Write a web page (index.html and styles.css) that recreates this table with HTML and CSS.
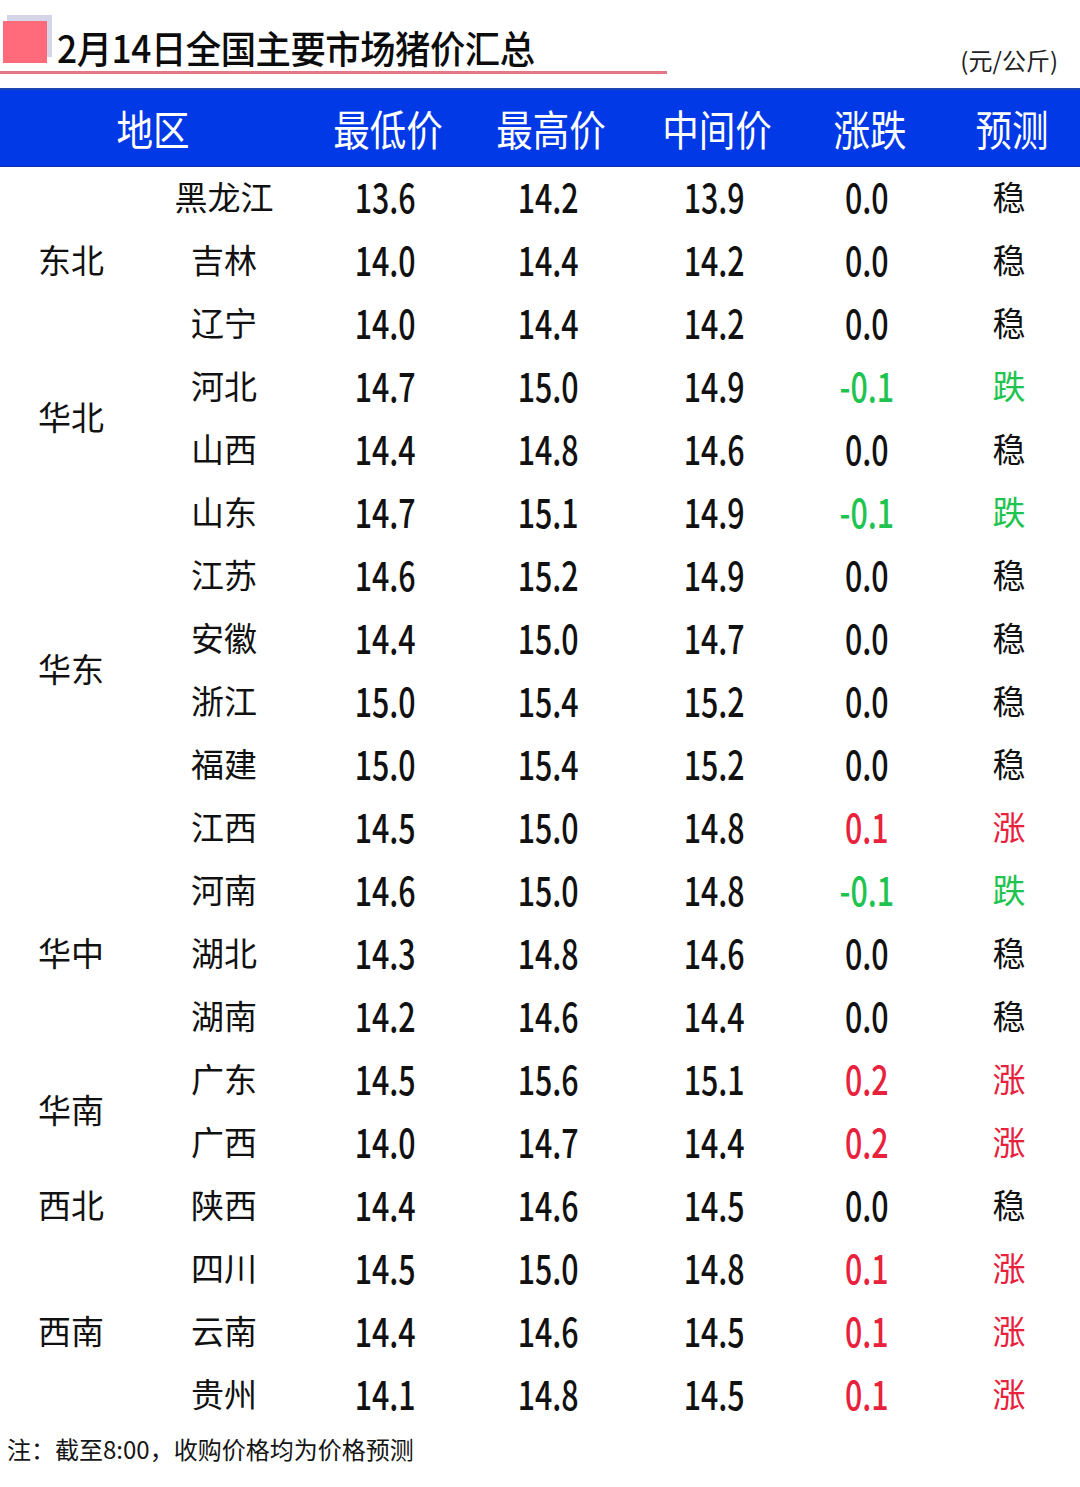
FILE: index.html
```html
<!DOCTYPE html>
<html lang="zh-CN">
<head>
<meta charset="utf-8">
<title>2月14日全国主要市场猪价汇总</title>
<link rel="stylesheet" href="styles.css">
</head>
<body>
<div class="page">
  <div class="top">
    <div class="title-wrap">
      <span class="sq sq-back"></span>
      <span class="sq sq-front"></span>
      <h1 class="title">2月14日全国主要市场猪价汇总</h1>
    </div>
    <div class="unit">(元/公斤)</div>
  </div>

  <div class="thead">
    <div class="th th-area"><span>地区</span></div>
    <div class="th"><span>最低价</span></div>
    <div class="th"><span>最高价</span></div>
    <div class="th"><span>中间价</span></div>
    <div class="th"><span>涨跌</span></div>
    <div class="th"><span>预测</span></div>
  </div>

  <div class="grid">
    <div class="region r3">东北</div>
    <div class="prov">黑龙江</div><div class="num"><span>13.6</span></div><div class="num"><span>14.2</span></div><div class="num"><span>13.9</span></div><div class="num"><span>0.0</span></div><div class="fc">稳</div>
    <div class="prov">吉林</div><div class="num"><span>14.0</span></div><div class="num"><span>14.4</span></div><div class="num"><span>14.2</span></div><div class="num"><span>0.0</span></div><div class="fc">稳</div>
    <div class="prov">辽宁</div><div class="num"><span>14.0</span></div><div class="num"><span>14.4</span></div><div class="num"><span>14.2</span></div><div class="num"><span>0.0</span></div><div class="fc">稳</div>

    <div class="region r2">华北</div>
    <div class="prov">河北</div><div class="num"><span>14.7</span></div><div class="num"><span>15.0</span></div><div class="num"><span>14.9</span></div><div class="num down"><span>-0.1</span></div><div class="fc down">跌</div>
    <div class="prov">山西</div><div class="num"><span>14.4</span></div><div class="num"><span>14.8</span></div><div class="num"><span>14.6</span></div><div class="num"><span>0.0</span></div><div class="fc">稳</div>

    <div class="region r6">华东</div>
    <div class="prov">山东</div><div class="num"><span>14.7</span></div><div class="num"><span>15.1</span></div><div class="num"><span>14.9</span></div><div class="num down"><span>-0.1</span></div><div class="fc down">跌</div>
    <div class="prov">江苏</div><div class="num"><span>14.6</span></div><div class="num"><span>15.2</span></div><div class="num"><span>14.9</span></div><div class="num"><span>0.0</span></div><div class="fc">稳</div>
    <div class="prov">安徽</div><div class="num"><span>14.4</span></div><div class="num"><span>15.0</span></div><div class="num"><span>14.7</span></div><div class="num"><span>0.0</span></div><div class="fc">稳</div>
    <div class="prov">浙江</div><div class="num"><span>15.0</span></div><div class="num"><span>15.4</span></div><div class="num"><span>15.2</span></div><div class="num"><span>0.0</span></div><div class="fc">稳</div>
    <div class="prov">福建</div><div class="num"><span>15.0</span></div><div class="num"><span>15.4</span></div><div class="num"><span>15.2</span></div><div class="num"><span>0.0</span></div><div class="fc">稳</div>
    <div class="prov">江西</div><div class="num"><span>14.5</span></div><div class="num"><span>15.0</span></div><div class="num"><span>14.8</span></div><div class="num up"><span>0.1</span></div><div class="fc up">涨</div>

    <div class="region r3">华中</div>
    <div class="prov">河南</div><div class="num"><span>14.6</span></div><div class="num"><span>15.0</span></div><div class="num"><span>14.8</span></div><div class="num down"><span>-0.1</span></div><div class="fc down">跌</div>
    <div class="prov">湖北</div><div class="num"><span>14.3</span></div><div class="num"><span>14.8</span></div><div class="num"><span>14.6</span></div><div class="num"><span>0.0</span></div><div class="fc">稳</div>
    <div class="prov">湖南</div><div class="num"><span>14.2</span></div><div class="num"><span>14.6</span></div><div class="num"><span>14.4</span></div><div class="num"><span>0.0</span></div><div class="fc">稳</div>

    <div class="region r2">华南</div>
    <div class="prov">广东</div><div class="num"><span>14.5</span></div><div class="num"><span>15.6</span></div><div class="num"><span>15.1</span></div><div class="num up"><span>0.2</span></div><div class="fc up">涨</div>
    <div class="prov">广西</div><div class="num"><span>14.0</span></div><div class="num"><span>14.7</span></div><div class="num"><span>14.4</span></div><div class="num up"><span>0.2</span></div><div class="fc up">涨</div>

    <div class="region r1">西北</div>
    <div class="prov">陕西</div><div class="num"><span>14.4</span></div><div class="num"><span>14.6</span></div><div class="num"><span>14.5</span></div><div class="num"><span>0.0</span></div><div class="fc">稳</div>

    <div class="region r3">西南</div>
    <div class="prov">四川</div><div class="num"><span>14.5</span></div><div class="num"><span>15.0</span></div><div class="num"><span>14.8</span></div><div class="num up"><span>0.1</span></div><div class="fc up">涨</div>
    <div class="prov">云南</div><div class="num"><span>14.4</span></div><div class="num"><span>14.6</span></div><div class="num"><span>14.5</span></div><div class="num up"><span>0.1</span></div><div class="fc up">涨</div>
    <div class="prov">贵州</div><div class="num"><span>14.1</span></div><div class="num"><span>14.8</span></div><div class="num"><span>14.5</span></div><div class="num up"><span>0.1</span></div><div class="fc up">涨</div>
  </div>

  <p class="note">注：截至8:00，收购价格均为价格预测</p>
</div>
</body>
</html>
```

FILE: styles.css
```css
* { box-sizing: border-box; }

html, body {
  margin: 0;
  padding: 0;
  background: #ffffff;
}

body {
  font-family: "Noto Sans CJK SC", "Noto Sans", sans-serif;
  color: #111111;
}

.page {
  width: 1080px;
}

/* ---------- top title bar ---------- */
.top {
  display: flex;
  justify-content: space-between;
  align-items: flex-start;
  height: 88px;
}

.title-wrap {
  position: relative;
  width: 667px;
  padding: 26px 0 3px 57px;
  border-bottom: 3px solid #e27886;
}

.sq {
  position: absolute;
  display: block;
}

.sq-back {
  left: 7px;
  top: 15px;
  width: 45px;
  height: 42px;
  background: #d5d5e8;
}

.sq-front {
  left: 3px;
  top: 21px;
  width: 44px;
  height: 42px;
  background: #ff6b7b;
}

.title {
  position: relative;
  margin: 0;
  font-size: 38px;
  line-height: 42px;
  font-weight: 500;
  color: #0c0c0c;
  letter-spacing: -0.5px;
  transform: scaleX(0.93);
  transform-origin: left center;
  white-space: nowrap;
}

.unit {
  margin: 44px 22px 0 0;
  font-size: 24px;
  line-height: 32px;
  color: #222;
}

/* ---------- blue header ---------- */
.thead {
  display: grid;
  grid-template-columns: 306px 158px 168px 164px 142px 142px;
  height: 79px;
  background: #0239e6;
  border-top: 2px solid #1d43b5;
  border-bottom: 1px solid #0a2fb0;
  align-items: center;
}

.th {
  text-align: center;
  color: #ffffff;
  font-size: 42px;
  line-height: 1;
  padding-left: 6px;
}

.th.th-area { padding-left: 0; }

.th span {
  display: inline-block;
  transform: scaleX(0.87);
}

/* ---------- data grid ---------- */
.grid {
  display: grid;
  grid-template-columns: 142px 164px 158px 168px 164px 142px 142px;
  grid-auto-rows: 63px;
}

.grid > div {
  display: flex;
  align-items: center;
  justify-content: center;
  padding-bottom: 6px;
}

.region {
  font-size: 33px;
  grid-column: 1;
}

.r1 { grid-row: span 1; }
.r2 { grid-row: span 2; }
.r3 { grid-row: span 3; }
.r6 { grid-row: span 6; }

.prov {
  grid-column: 2;
  font-size: 33px;
}

.num {
  font-size: 40px;
  font-weight: 500;
}

.num span {
  display: inline-block;
  transform: scaleX(0.76);
}

.fc {
  font-size: 33px;
}

.up { color: #e8213d; }
.down { color: #1fc450; }

/* ---------- footnote ---------- */
.note {
  margin: 5px 0 0 7px;
  font-size: 24px;
  line-height: 34px;
  color: #151515;
}
```
